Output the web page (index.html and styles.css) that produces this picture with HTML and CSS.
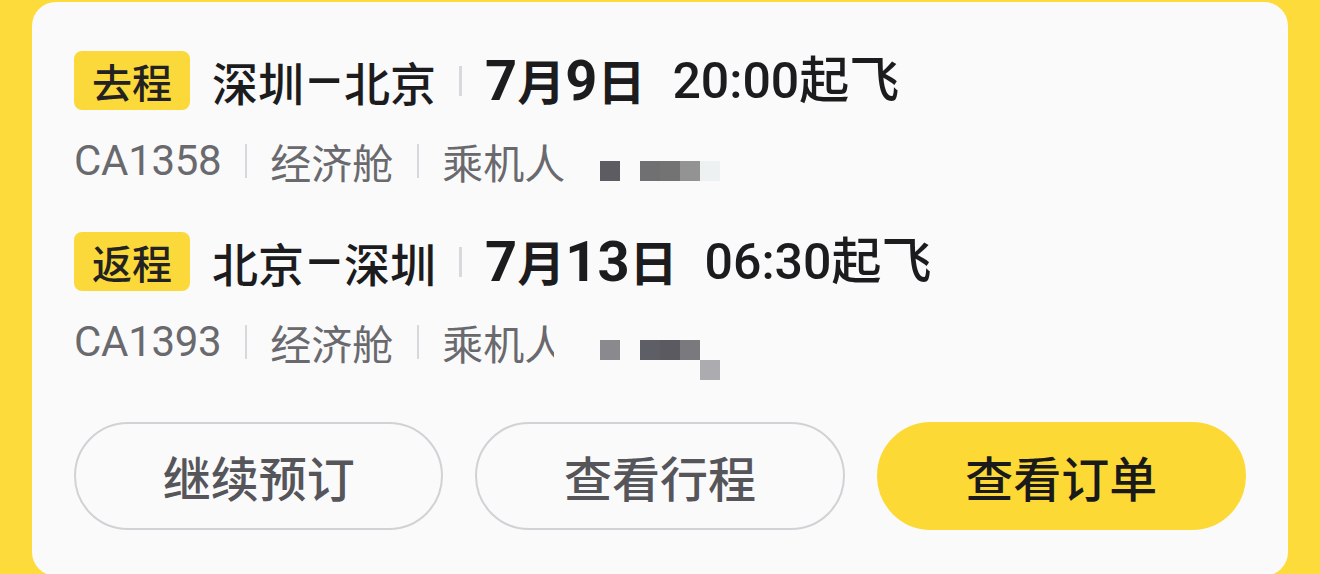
FILE: index.html
```html
<!DOCTYPE html>
<html lang="zh-CN">
<head>
<meta charset="utf-8">
<title>行程</title>
<link rel="stylesheet" href="styles.css">
</head>
<body>
<div class="card">
  <div class="seg">
    <div class="title-row">
      <span class="tag">去程</span>
      <span class="route">深圳<span class="dash">–</span>北京</span>
      <span class="vsep"></span>
      <span class="date"><span class="num">7</span>月<span class="num">9</span>日</span>
      <span class="time">20:00起飞</span>
    </div>
    <div class="info-row">
      <span class="code">CA1358</span>
      <span class="isep"></span>
      <span>经济舱</span>
      <span class="isep"></span>
      <span>乘机人</span>
      <div class="mosaic m1">
        <i class="b" style="left:0;top:0;background:#5c5c62"></i>
        <i class="b" style="left:40px;top:0;background:#707072"></i>
        <i class="b" style="left:60px;top:0;background:#737373"></i>
        <i class="b" style="left:80px;top:0;background:#939393"></i>
        <i class="b" style="left:100px;top:0;background:#eef1f2"></i>
      </div>
    </div>
  </div>
  <div class="seg">
    <div class="title-row">
      <span class="tag">返程</span>
      <span class="route">北京<span class="dash">–</span>深圳</span>
      <span class="vsep"></span>
      <span class="date"><span class="num">7</span>月<span class="num">13</span>日</span>
      <span class="time">06:30起飞</span>
    </div>
    <div class="info-row">
      <span class="code">CA1393</span>
      <span class="isep"></span>
      <span>经济舱</span>
      <span class="isep"></span>
      <span>乘机人</span>
      <div class="mosaic m2">
        <i class="b cover" style="left:-46px;top:-20px;background:#fafafa"></i>
        <i class="b" style="left:0;top:0;background:#8a8a8e"></i>
        <i class="b" style="left:40px;top:0;background:#5e5e66"></i>
        <i class="b" style="left:60px;top:0;background:#5a5a60"></i>
        <i class="b" style="left:80px;top:0;background:#7a7a7e"></i>
        <i class="b" style="left:100px;top:20px;background:#acacb0"></i>
      </div>
    </div>
  </div>
  <div class="actions">
    <button class="btn">继续预订</button>
    <button class="btn">查看行程</button>
    <button class="btn primary">查看订单</button>
  </div>
</div>
</body>
</html>
```

FILE: styles.css
```css
html, body {
  margin: 0;
  padding: 0;
}
body {
  background: #fddb3a;
  width: 1320px;
  height: 574px;
  overflow: hidden;
  font-family: "Noto Sans CJK SC", sans-serif;
}
.card {
  margin: 2px 32px 0 32px;
  height: 574px;
  background: #fafafa;
  border-radius: 24px;
  padding: 49px 42px 0 42px;
  box-sizing: border-box;
}
.seg + .seg {
  margin-top: 46px;
}
.title-row {
  display: flex;
  align-items: center;
  height: 59px;
  color: #1c1c1e;
}
.tag {
  display: flex;
  align-items: center;
  justify-content: center;
  width: 116px;
  height: 59px;
  background: #fcd93a;
  border-radius: 8px;
  font-size: 40px;
  font-weight: 500;
  color: #222;
  line-height: 1;
}
.route {
  margin-left: 22px;
  font-size: 46px;
  font-weight: 500;
  line-height: 1;
  display: flex;
  align-items: center;
}
.dash {
  font-family: "Roboto", sans-serif;
  font-weight: 500;
  font-size: 50px;
  margin: 0 4px;
  transform: scaleX(1.2);
}
.vsep {
  width: 3px;
  height: 30px;
  background: #d9d9dd;
  margin: 0 23px 0 23px;
}
.date {
  font-size: 48px;
  font-weight: 700;
  line-height: 1;
  display: flex;
  align-items: baseline;
}
.num {
  font-family: "Roboto", sans-serif;
  font-weight: 700;
  font-size: 56px;
}
.time {
  margin-left: 27px;
  font-family: "Roboto", "Noto Sans CJK SC", sans-serif;
  font-size: 50px;
  font-weight: 500;
  line-height: 1;
}
.info-row {
  position: relative;
  display: flex;
  align-items: center;
  height: 50px;
  margin-top: 26px;
  font-size: 41px;
  color: #69696e;
  line-height: 1;
}
.code {
  font-family: "Roboto", sans-serif;
  font-size: 42px;
  letter-spacing: -0.3px;
}
.isep {
  width: 2px;
  height: 34px;
  background: #d8d8dc;
  margin: 0 23px 0 24px;
}
.mosaic {
  position: absolute;
  left: 526px;
  top: 25px;
  width: 120px;
  height: 20px;
}
.mosaic.m2 {
  top: 23px;
}
.b {
  position: absolute;
  width: 20px;
  height: 20px;
  display: block;
}
.b.cover {
  width: 46px;
  height: 50px;
}
.actions {
  display: flex;
  gap: 32px;
  margin-top: 55px;
}
.btn {
  flex: 1;
  height: 108px;
  border-radius: 54px;
  border: 2.5px solid #d2d2d6;
  background: transparent;
  font-family: "Noto Sans CJK SC", sans-serif;
  font-size: 48px;
  font-weight: 500;
  color: #55555a;
  padding: 0;
}
.btn.primary {
  background: #fcd935;
  border-color: #fcd935;
  color: #1a1a1a;
}
```
